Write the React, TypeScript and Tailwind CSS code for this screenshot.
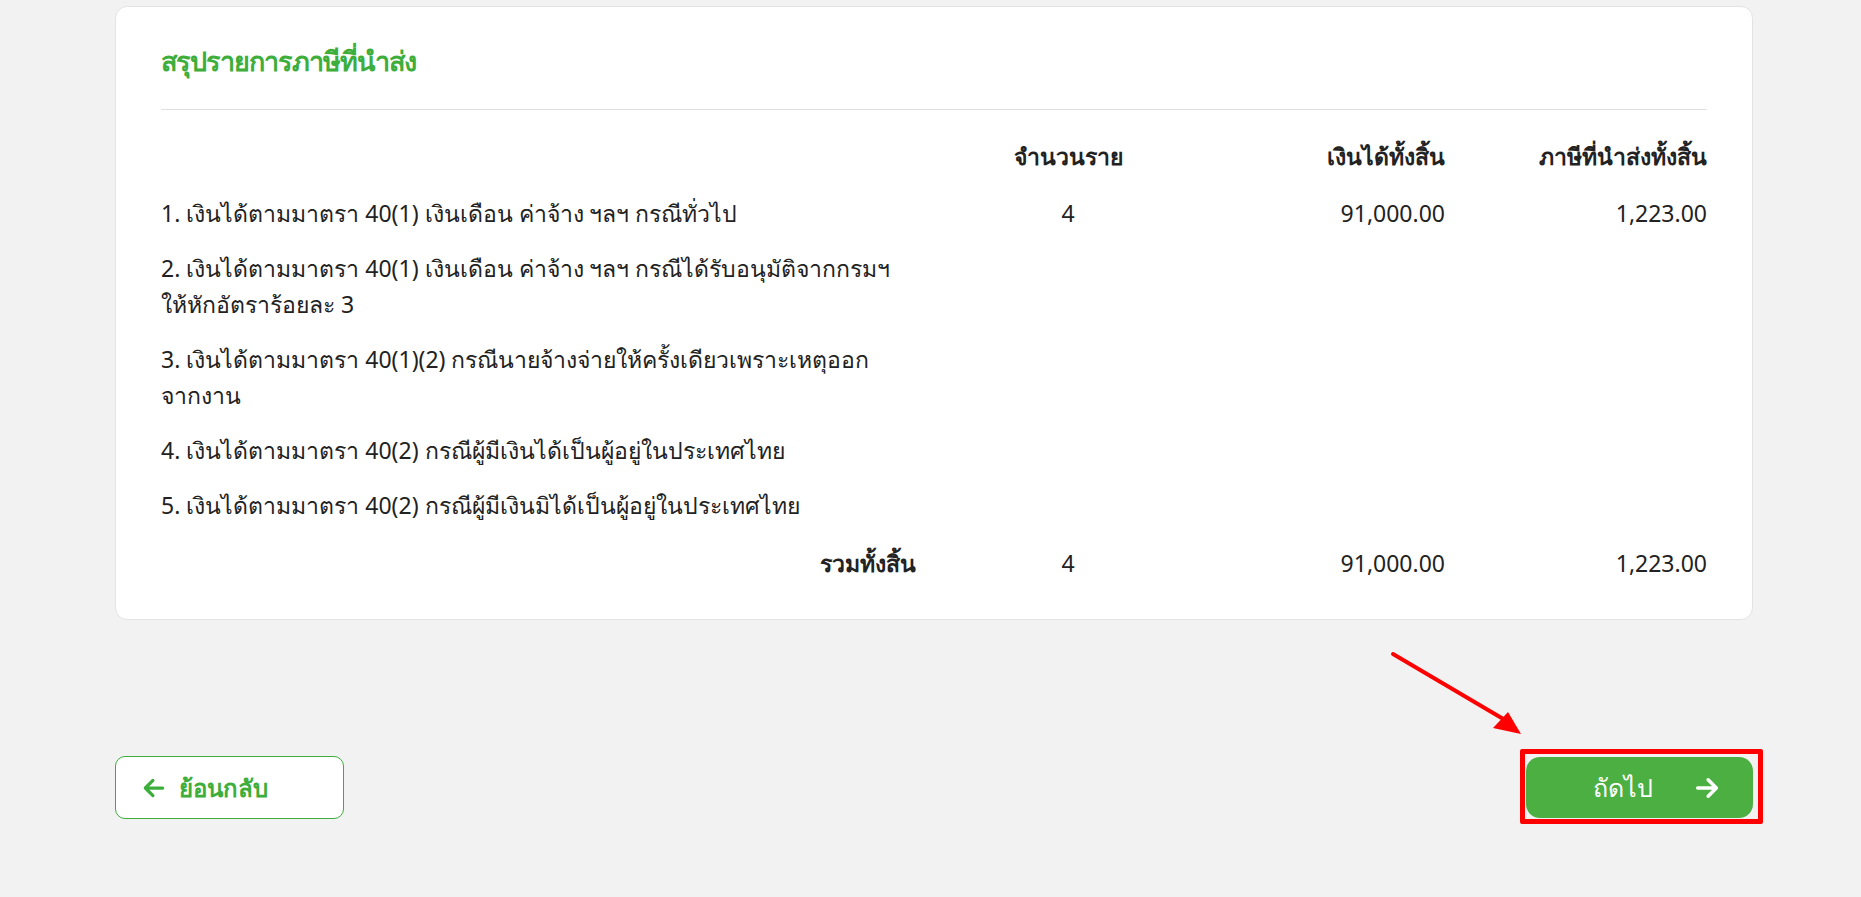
import React from "react";

const rows = [
  { label: "1. เงินได้ตามมาตรา 40(1) เงินเดือน ค่าจ้าง ฯลฯ กรณีทั่วไป", n: "4", inc: "91,000.00", tax: "1,223.00" },
  { label: "2. เงินได้ตามมาตรา 40(1) เงินเดือน ค่าจ้าง ฯลฯ กรณีได้รับอนุมัติจากกรมฯ ให้หักอัตราร้อยละ 3", n: "", inc: "", tax: "" },
  { label: "3. เงินได้ตามมาตรา 40(1)(2) กรณีนายจ้างจ่ายให้ครั้งเดียวเพราะเหตุออกจากงาน", n: "", inc: "", tax: "" },
  { label: "4. เงินได้ตามมาตรา 40(2) กรณีผู้มีเงินได้เป็นผู้อยู่ในประเทศไทย", n: "", inc: "", tax: "" },
  { label: "5. เงินได้ตามมาตรา 40(2) กรณีผู้มีเงินมิได้เป็นผู้อยู่ในประเทศไทย", n: "", inc: "", tax: "" },
];

const cols = "grid grid-cols-[755px_304px_225px_1fr]";

export default function App() {
  return (
    <div className="w-[1861px] h-[897px] bg-[#f2f2f2] relative overflow-hidden text-[#222]" style={{ fontFamily: '"Noto Sans", Tahoma, sans-serif' }}>
      <div className="pl-[115px] pr-[108px] pt-[6px]">
        <div className="bg-white rounded-[12px] border border-[#e3e3e3] h-[614px] px-[45px] pt-[38px]">
          <h1 className="text-[27px] font-bold text-[#3dae3b] tracking-[-1px] leading-[32px]">สรุปรายการภาษีที่นำส่ง</h1>
          <div className="mt-[32px] border-t border-[#e0e0e0]" />
          <div className={`${cols} mt-[28px] text-[23px] leading-[36px]`}>
            <div />
            <div className="text-center font-bold">จำนวนราย</div>
            <div className="text-right font-bold">เงินได้ทั้งสิ้น</div>
            <div className="text-right font-bold">ภาษีที่นำส่งทั้งสิ้น</div>
          </div>
          <div className="text-[23px] leading-[36px]">
            {rows.map((r, i) => (
              <div key={i} className={`${cols} ${i === 0 ? "mt-[21px]" : "mt-[19px]"}`}>
                <div className="pr-[20px]">{r.label}</div>
                <div className="text-center">{r.n}</div>
                <div className="text-right">{r.inc}</div>
                <div className="text-right">{r.tax}</div>
              </div>
            ))}
            <div className={`${cols} mt-[22px]`}>
              <div className="text-right font-bold">รวมทั้งสิ้น</div>
              <div className="text-center">4</div>
              <div className="text-right">91,000.00</div>
              <div className="text-right">1,223.00</div>
            </div>
          </div>
        </div>
      </div>
      <div className="flex justify-between items-center pl-[115px] pr-[108px] mt-[136px]">
        <button className="w-[229px] h-[63px] rounded-[10px] border border-[#3dae3b] bg-white flex items-center pl-[25px] gap-[12px] text-[#3dae3b] text-[24px] font-bold">
          <svg width="26" height="26" viewBox="0 0 24 24" fill="none" stroke="currentColor" strokeWidth="3" strokeLinecap="round" strokeLinejoin="round"><path d="M20 12H5M11 5l-7 7 7 7" /></svg>
          ย้อนกลับ
        </button>
        <div className="relative">
          <span className="absolute left-[-6px] right-[-10px] top-[-8px] bottom-[-6px] border-[5px] border-[#ff0000] rounded-[2px]" />
          <button className="relative w-[227px] h-[61px] rounded-[14px] bg-[#4caf42] flex items-center justify-end pr-[32px] gap-[40px] text-white text-[25px]">
            ถัดไป
            <svg width="28" height="28" viewBox="0 0 24 24" fill="none" stroke="currentColor" strokeWidth="3" strokeLinecap="round" strokeLinejoin="round"><path d="M4 12h15M13 5l7 7-7 7" /></svg>
          </button>
        </div>
      </div>
      <svg className="absolute left-0 top-0 pointer-events-none" width="1861" height="897">
        <line x1="1393" y1="654" x2="1505" y2="720" stroke="#ff0000" strokeWidth="4" strokeLinecap="round" />
        <polygon points="1521,734 1493,728 1508,712" fill="#ff0000" />
      </svg>
    </div>
  );
}
